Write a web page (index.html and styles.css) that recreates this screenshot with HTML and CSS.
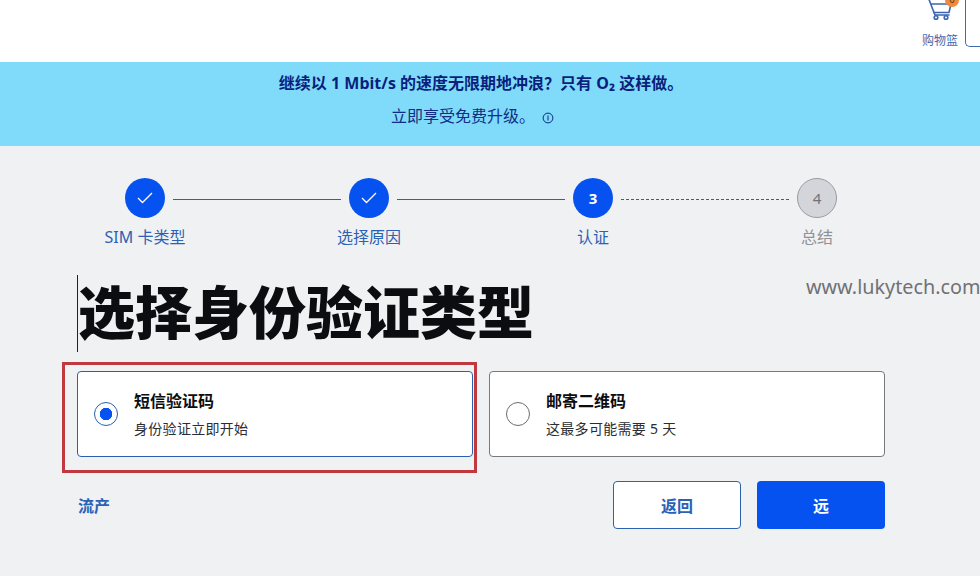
FILE: index.html
```html
<!DOCTYPE html>
<html lang="zh-Hans">
<head>
  <meta charset="UTF-8">
  <title>选择身份验证类型</title>
  <link rel="stylesheet" href="styles.css">
</head>
<body>
  <header class="top">
    <div class="cart">
      <span class="cart-icon">
        <svg width="26" height="24" viewBox="0 0 26 24" fill="none" stroke="#3a66b0" stroke-width="1.600" stroke-linecap="round" stroke-linejoin="round">
          <path d="M2 2.500l5 13h15l2-8.500H4"/>
          <path d="M7 15.500l1 2.500h14"/>
          <circle cx="9" cy="20.500" r="1.800"/>
          <circle cx="19" cy="20.500" r="1.800"/>
        </svg>
        <span class="cart-badge">0</span>
      </span>
      <span class="cart-label">购物篮</span>
    </div>
    <div class="account"></div>
  </header>

  <section class="banner">
    <p class="banner-title">继续以 1 Mbit/s 的速度无限期地冲浪？只有 O₂ 这样做。</p>
    <p class="banner-text">立即享受免费升级。
      <svg class="info" width="12" height="12" viewBox="0 0 12 12" fill="none" stroke="#0a2a80">
        <circle cx="6" cy="6" r="4.900"/>
        <path d="M6 3.500v5"/>
      </svg>
    </p>
  </section>

  <main class="page">
    <div class="track">
      <span class="dot done">
        <svg width="16" height="12" viewBox="0 0 16 12" fill="none" stroke="#fff" stroke-width="1.300"><path d="M1 6l4.500 4.500L15 1"/></svg>
      </span>
      <span class="line"></span>
      <span class="dot done">
        <svg width="16" height="12" viewBox="0 0 16 12" fill="none" stroke="#fff" stroke-width="1.300"><path d="M1 6l4.500 4.500L15 1"/></svg>
      </span>
      <span class="line"></span>
      <span class="dot current">3</span>
      <span class="line dashed"></span>
      <span class="dot todo">4</span>
    </div>
    <div class="labels">
      <span>SIM 卡类型</span>
      <span>选择原因</span>
      <span>认证</span>
      <span class="muted">总结</span>
    </div>

    <h1>选择身份验证类型</h1>
    <span class="watermark">www.lukytech.com</span>

    <div class="options">
      <label class="option selected">
        <span class="radio"></span>
        <span>
          <strong>短信验证码</strong>
          <small>身份验证立即开始</small>
        </span>
      </label>
      <label class="option">
        <span class="radio"></span>
        <span>
          <strong>邮寄二维码</strong>
          <small>这最多可能需要 5 天</small>
        </span>
      </label>
    </div>

    <div class="actions">
      <a class="abort" href="#">流产</a>
      <a class="btn btn-back" href="#">返回</a>
      <a class="btn btn-next" href="#">远</a>
    </div>
  </main>
</body>
</html>
```

FILE: styles.css
```css
*, *::after { box-sizing: border-box; }
html, body { height: 100%; }
body {
  margin: 0;
  overflow: hidden;
  background: #f0f1f3;
  color: #111;
  font-family: "Noto Sans", "Noto Sans CJK SC", sans-serif;
}
a { text-decoration: none; }

.top {
  height: 62px;
  background: #fff;
  display: flex;
  justify-content: flex-end;
  align-items: flex-end;
  overflow: hidden;
  padding-bottom: 13px;
}
.cart {
  display: flex;
  flex-direction: column;
  align-items: center;
  margin-right: 7px;
}
.cart-icon { position: relative; display: block; height: 24px; margin-bottom: 12px; }
.cart-icon svg { display: block; }
.cart-badge {
  position: absolute;
  top: -4px;
  right: -6px;
  width: 14px;
  height: 14px;
  border-radius: 50%;
  background: #ee8a3c;
  color: #5a3010;
  font-size: 9px;
  line-height: 14px;
  text-align: center;
}
.cart-label { font-size: 12px; line-height: 16px; color: #3f6bb0; }
.account {
  width: 15px;
  height: 60px;
  border: 1px solid #3f6bb0;
  border-right: 0;
  border-radius: 5px 0 0 5px;
  margin-bottom: 2px;
}

.banner {
  height: 84px;
  background: #80dbfa;
  color: #0a1f7d;
  text-align: center;
  padding: 10px 18px 0 0;
}
.banner p { margin: 0; font-size: 16px; line-height: 22px; }
.banner-title { font-weight: 700; }
.banner .banner-text { margin-top: 11px; padding-right: 17px; color: #0f2e85; }
.info { margin-left: 3px; vertical-align: -2px; }

.page { position: relative; padding: 32px 95px 0 78px; }

.track {
  display: flex;
  align-items: center;
  width: 712px;
  margin-left: 47px;
}
.dot {
  flex: none;
  width: 40px;
  height: 40px;
  border-radius: 50%;
  display: flex;
  align-items: center;
  justify-content: center;
  font-size: 15px;
  font-weight: 700;
}
.done, .current { background: #0652f0; color: #fff; }
.todo { background: #d3d5da; border: 1px solid #9a9ca2; color: #70737a; font-weight: 400; }
.line {
  flex: 1;
  margin: 2px 8px 0;
  border-top: 1px solid #2060d8;
}
.line.dashed { border-top: 1px dashed #2a5ccc; }

.labels {
  display: grid;
  grid-template-columns: repeat(4, 224px);
  margin: 8px 0 0 -45px;
  font-size: 16px;
  line-height: 22px;
  color: #2c62b4;
  text-align: center;
}
.labels .muted { color: #8f9298; }

h1 {
  margin: 27px 0 0 -1px;
  height: 77px;
  border-left: 1px solid #222;
  font-size: 57px;
  line-height: 75px;
  font-weight: 900;
  color: #0c0d10;
  white-space: nowrap;
}
.watermark {
  position: absolute;
  top: 127px;
  left: 806px;
  font-size: 19.800px;
  line-height: 28px;
  color: #6f7175;
  white-space: nowrap;
}

.options {
  display: flex;
  gap: 16px;
  margin: 19px 0 0 -1px;
}
.option {
  position: relative;
  flex: 0 0 396px;
  height: 86px;
  background: #fff;
  border: 1px solid #77797e;
  border-radius: 4px;
  display: flex;
  align-items: center;
  gap: 16px;
  padding-left: 16px;
}
.option.selected { border-color: #2a5fb0; }
.option.selected::after {
  content: "";
  position: absolute;
  top: -10px;
  left: -16px;
  width: 415px;
  height: 111px;
  border: 3px solid #c0393e;
  pointer-events: none;
}
.radio {
  flex: none;
  width: 24px;
  height: 24px;
  border-radius: 50%;
  border: 1px solid #6a6c70;
  background: #fff;
}
.selected .radio {
  border-color: #2a5fb0;
  background: radial-gradient(circle, #0652f0 0 6px, #fff 6.500px);
}
.option strong { display: block; font-size: 16px; line-height: 22px; font-weight: 700; color: #0c0d10; }
.option small { display: block; margin-top: 7px; font-size: 14px; line-height: 20px; letter-spacing: .3px; color: #2b2d31; }

.actions {
  display: flex;
  align-items: center;
  gap: 16px;
  margin-top: 24px;
}
.abort { margin-right: auto; font-size: 16px; font-weight: 700; color: #2a62b8; }
.btn {
  width: 128px;
  height: 48px;
  border-radius: 4px;
  display: flex;
  align-items: center;
  justify-content: center;
  font-size: 16px;
  font-weight: 700;
}
.btn-back { background: #fff; border: 1px solid #2a62b0; color: #2a62b8; }
.btn-next { background: #0652f0; color: #fff; }
```
